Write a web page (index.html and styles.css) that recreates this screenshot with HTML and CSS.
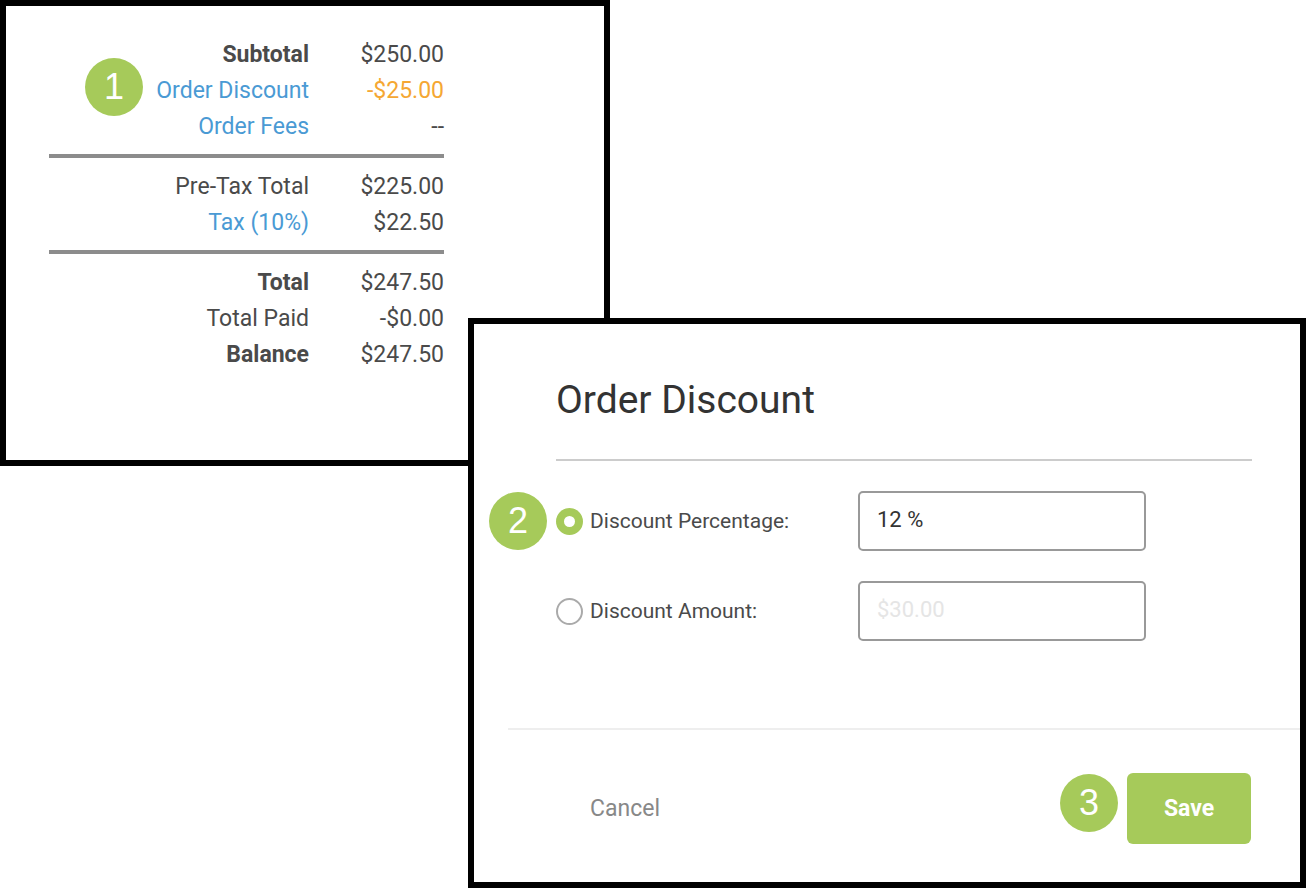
FILE: index.html
```html
<!DOCTYPE html>
<html lang="en">
<head>
    <meta charset="UTF-8">
    <title>Order Discount</title>
    <link rel="stylesheet" href="styles.css">
</head>
<body>
    <div class="canvas">
        <!-- Order totals -->
        <section class="totals-card">
            <span class="badge badge-one">1</span>
            <div class="total-row"><span class="total-label strong">Subtotal</span><span class="total-value">$250.00</span></div>
            <div class="total-row"><span class="total-label link">Order Discount</span><span class="total-value discount">-$25.00</span></div>
            <div class="total-row"><span class="total-label link">Order Fees</span><span class="total-value">--</span></div>
            <hr class="total-rule">
            <div class="total-row"><span class="total-label">Pre-Tax Total</span><span class="total-value">$225.00</span></div>
            <div class="total-row"><span class="total-label link">Tax (10%)</span><span class="total-value">$22.50</span></div>
            <hr class="total-rule">
            <div class="total-row"><span class="total-label strong">Total</span><span class="total-value">$247.50</span></div>
            <div class="total-row"><span class="total-label">Total Paid</span><span class="total-value">-$0.00</span></div>
            <div class="total-row"><span class="total-label strong">Balance</span><span class="total-value">$247.50</span></div>
        </section>

        <!-- Discount dialog -->
        <section class="discount-card">
            <div class="dialog-body">
                <h2 class="dialog-title">Order Discount</h2>
                <div class="field-row">
                    <span class="badge badge-two">2</span>
                    <span class="radio checked"></span>
                    <span class="field-label">Discount Percentage:</span>
                    <div class="field-input">12 %</div>
                </div>
                <div class="field-row">
                    <span class="radio"></span>
                    <span class="field-label">Discount Amount:</span>
                    <div class="field-input placeholder">$30.00</div>
                </div>
            </div>
            <div class="dialog-footer">
                <span class="cancel">Cancel</span>
                <span class="badge badge-three">3</span>
                <button class="save" type="button">Save</button>
            </div>
        </section>
    </div>
</body>
</html>
```

FILE: styles.css
```css
/* Shared colours */
:root {
    --green: #a6ca5a;
    --text: #4a4a4a;
    --link: #4a9ad4;
    --orange: #f5a733;
    --rule: #8c8c8c;
}

* {
    box-sizing: border-box;
}

body {
    margin: 0;
    background-color: #fff;
    color: var(--text);
    font-family: 'Roboto', sans-serif;
}

.canvas {
    position: relative;
    width: 1306px;
    height: 888px;
    overflow: hidden;
}

/* Totals card */
.totals-card {
    position: relative;
    width: 610px;
    height: 466px;
    padding: 30px 0 0 43px;
    border: 6px solid #000;
    background-color: #fff;
}

.total-row {
    display: flex;
    width: 395px;
    height: 36px;
    align-items: center;
    font-size: 23px;
}

.total-label {
    width: 260px;
    text-align: right;
}

.total-value {
    flex: 1;
    text-align: right;
}

.strong {
    font-weight: 700;
}

.link {
    color: var(--link);
}

.discount {
    color: var(--orange);
}

.total-rule {
    width: 395px;
    height: 4px;
    margin: 10px 0 10px;
    border: 0;
    background-color: var(--rule);
}

/* Number badges */
.badge {
    position: absolute;
    display: flex;
    width: 58px;
    height: 58px;
    align-items: center;
    justify-content: center;
    border-radius: 50%;
    background-color: var(--green);
    color: #fff;
    font-family: 'Liberation Sans', sans-serif;
    font-size: 36px;
}

.badge-one {
    top: 52px;
    left: 79px;
}

.badge-two {
    top: 50%;
    left: -67px;
    transform: translateY(-50%);
}

.badge-three {
    top: 44px;
    left: 586px;
}

/* Discount dialog */
.discount-card {
    position: absolute;
    top: 318px;
    left: 468px;
    width: 838px;
    height: 570px;
    border: 6px solid #000;
    background-color: #fff;
}

.dialog-body {
    height: 406px;
    padding: 0 48px 0 82px;
    border-bottom: 2px solid #eee;
    margin-left: 34px;
    padding-left: 48px;
}

.dialog-title {
    height: 137px;
    margin: 0 0 30px;
    padding-top: 48px;
    border-bottom: 2px solid #ccc;
    color: #333;
    font-size: 39px;
    font-weight: 400;
    line-height: 56px;
}

.field-row {
    position: relative;
    display: flex;
    height: 60px;
    margin-bottom: 30px;
    align-items: center;
}

.radio {
    display: flex;
    width: 27px;
    height: 27px;
    margin-right: 7px;
    align-items: center;
    justify-content: center;
    border: 2px solid #aaa;
    border-radius: 50%;
}

.radio.checked {
    border: 0;
    background-color: var(--green);
}

.radio.checked::after {
    content: '';
    width: 11px;
    height: 11px;
    border-radius: 50%;
    background-color: #fff;
}

.field-label {
    width: 268px;
    font-size: 21px;
}

.field-input {
    display: flex;
    width: 288px;
    height: 60px;
    padding: 0 0 4px 17px;
    align-items: center;
    border: 2px solid #999;
    border-radius: 5px;
    color: #333;
    font-size: 22px;
}

.field-input.placeholder {
    color: #e5e5e5;
}

.dialog-footer {
    position: relative;
    display: flex;
    height: 156px;
    padding: 0 49px 0 116px;
    align-items: center;
    justify-content: space-between;
}

.cancel {
    color: #888;
    font-size: 23px;
}

.save {
    width: 124px;
    height: 71px;
    border: 0;
    border-radius: 6px;
    background-color: var(--green);
    color: #fff;
    font-family: 'Roboto', sans-serif;
    font-size: 23px;
    font-weight: 700;
}
```
